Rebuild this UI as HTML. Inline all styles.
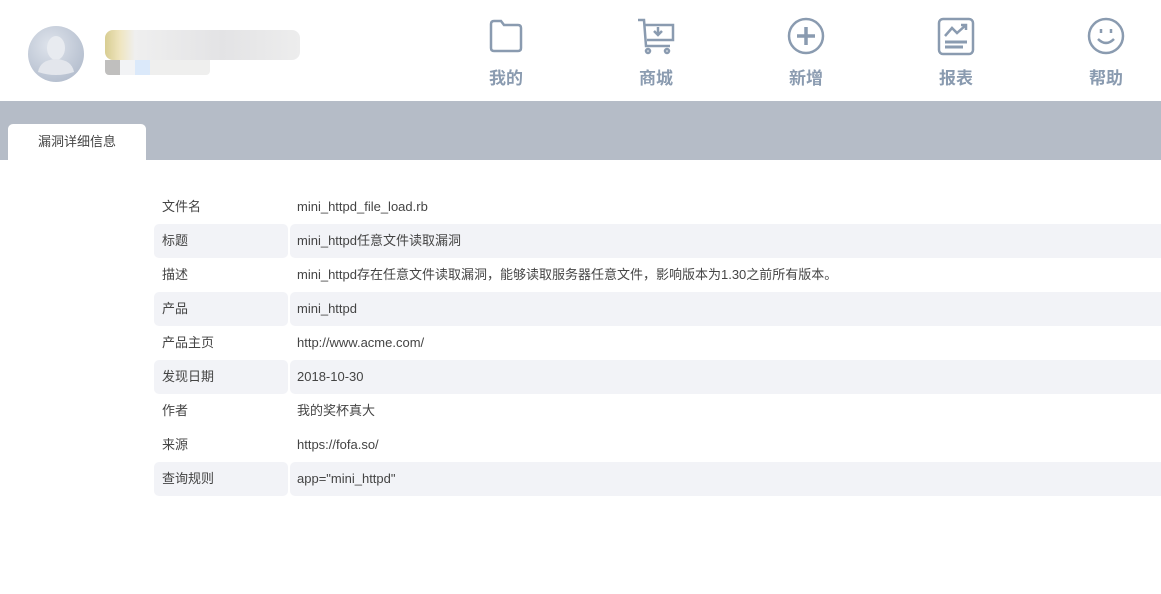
<!DOCTYPE html>
<html><head><meta charset="utf-8"><style>
*{margin:0;padding:0;box-sizing:border-box}
body{width:1161px;height:594px;background:#fff;font-family:"Liberation Sans","Noto Sans CJK SC",sans-serif;position:relative;overflow:hidden}
.av{position:absolute;left:28px;top:26px;width:56px;height:56px;border-radius:50%;background:radial-gradient(circle at 40% 35%,#dfe4ec,#a9b4c6)}
.nav{position:absolute;top:16px;width:60px;text-align:center;color:#8a9bb0;font-weight:bold;font-size:17px}
.nav svg{display:block;margin:0 auto 8px}
.band{position:absolute;left:0;top:101px;width:1161px;height:59px;background:#b5bcc7}
.tab{position:absolute;left:8px;top:124px;width:138px;height:36px;background:#fff;border-radius:5px 5px 0 0;font-size:13px;color:#444;text-align:center;line-height:36px}
.row{position:absolute;left:154px;width:1007px;height:34px;font-size:13px;color:#444;line-height:34px}
.row .l{position:absolute;left:0;width:134px;height:34px;padding-left:8px;border-radius:5px}
.row .v{position:absolute;left:136px;right:0;height:34px;padding-left:7px;border-radius:5px 0 0 5px}
.s .l,.s .v{background:#f2f3f7}
</style></head><body>
<div class="av"><svg width="56" height="56" viewBox="0 0 56 56"><ellipse cx="28" cy="22" rx="9" ry="12" fill="#e8ebf0"/><path d="M10 46 Q12 34 28 33 Q44 34 46 46 Q28 52 10 46Z" fill="#e3e6ec"/></svg></div>
<div style="position:absolute;left:105px;top:30px;width:195px;height:30px;border-radius:8px;background:linear-gradient(90deg,#d8cd92 0,#efe5bf 15px,#efefef 30px,#e3e3e5 60%,#ededed 100%)"></div>
<div style="position:absolute;left:105px;top:60px;width:105px;height:15px;border-radius:0 0 4px 4px;background:linear-gradient(90deg,#c0bfbe 0,#c0bfbe 15px,#f2f3f5 15px,#f2f3f5 30px,#dbe9fa 30px,#dbe9fa 45px,#efefee 45px)"></div>
<div class="nav" style="left:476px"><svg width="40" height="40" viewBox="0 0 40 40" fill="none" stroke="#8a9bb0" stroke-width="2.5"><path d="M5 8 Q5 5 8 5 H15 L18 9 H32 Q35 9 35 12 V32 Q35 35 32 35 H8 Q5 35 5 32Z"/></svg>我的</div>
<div class="nav" style="left:626px"><svg width="40" height="40" viewBox="0 0 40 40" fill="none" stroke="#8a9bb0" stroke-width="2.5"><path d="M2 4 H8 L10 30 H34"/><path d="M9 9 H37 V24 H11"/><path d="M22 11 V19 M18 15 L22 19 L26 15"/><circle cx="12" cy="35" r="2"/><circle cx="31" cy="35" r="2"/></svg>商城</div>
<div class="nav" style="left:776px"><svg width="40" height="40" viewBox="0 0 40 40" fill="none" stroke="#8a9bb0" stroke-width="2.5"><circle cx="20" cy="20" r="17"/><path d="M20 11 V29 M11 20 H29" stroke-width="3.5"/></svg>新增</div>
<div class="nav" style="left:926px"><svg width="40" height="40" viewBox="0 0 40 40" fill="none" stroke="#8a9bb0" stroke-width="2.5"><rect x="3" y="3" width="34" height="35" rx="4"/><path d="M9 20 L16 12 L21 17 L30 9 M25 9 H30 V14"/><path d="M9 26 H31 M9 31 H27" stroke-width="3"/></svg>报表</div>
<div class="nav" style="left:1076px"><svg width="40" height="40" viewBox="0 0 40 40" fill="none" stroke="#8a9bb0" stroke-width="2.5"><circle cx="20" cy="20" r="17"/><path d="M15 13 V17 M25 13 V17"/><path d="M12 23 Q20 31 28 23"/></svg>帮助</div>
<div class="band"></div>
<div class="tab">漏洞详细信息</div>
<div class="row" style="top:190px"><div class="l">文件名</div><div class="v">mini_httpd_file_load.rb</div></div>
<div class="row s" style="top:224px"><div class="l">标题</div><div class="v">mini_httpd任意文件读取漏洞</div></div>
<div class="row" style="top:258px"><div class="l">描述</div><div class="v">mini_httpd存在任意文件读取漏洞，能够读取服务器任意文件，影响版本为1.30之前所有版本。</div></div>
<div class="row s" style="top:292px"><div class="l">产品</div><div class="v">mini_httpd</div></div>
<div class="row" style="top:326px"><div class="l">产品主页</div><div class="v">http://www.acme.com/</div></div>
<div class="row s" style="top:360px"><div class="l">发现日期</div><div class="v">2018-10-30</div></div>
<div class="row" style="top:394px"><div class="l">作者</div><div class="v">我的奖杯真大</div></div>
<div class="row" style="top:428px"><div class="l">来源</div><div class="v">https://fofa.so/</div></div>
<div class="row s" style="top:462px"><div class="l">查询规则</div><div class="v">app="mini_httpd"</div></div>
</body></html>
